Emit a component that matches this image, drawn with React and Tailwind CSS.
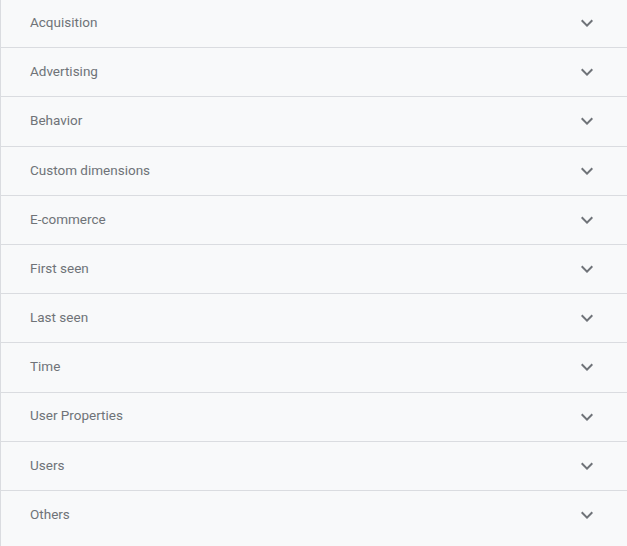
import React from 'react';

const SECTIONS = [
  'Acquisition',
  'Advertising',
  'Behavior',
  'Custom dimensions',
  'E-commerce',
  'First seen',
  'Last seen',
  'Time',
  'User Properties',
  'Users',
  'Others',
];

function ExpandMore() {
  return (
    <svg width="24" height="24" viewBox="0 0 24 24" className="fill-[#6f7378]">
      <path d="M16.59 8.59L12 13.17 7.41 8.59 6 10l6 6 6-6z" />
    </svg>
  );
}

export default function App() {
  return (
    <div
      className="w-[627px] h-[546px] overflow-hidden bg-[#f8f9fa] border-l border-[#dadce0]"
      style={{ fontFamily: 'Roboto, "Liberation Sans", sans-serif' }}
    >
      <div className="-mt-px">
        {SECTIONS.map((name, i) => (
          <div
            key={name}
            className={`flex items-center justify-between h-[49.2px] pl-[29px] pr-[28px] text-[13.5px] text-[#6f7378] ${
              i < SECTIONS.length - 1 ? 'border-b border-[#dadce0]' : ''
            }`}
          >
            <span className="mb-[2px]">{name}</span>
            <ExpandMore />
          </div>
        ))}
      </div>
    </div>
  );
}
